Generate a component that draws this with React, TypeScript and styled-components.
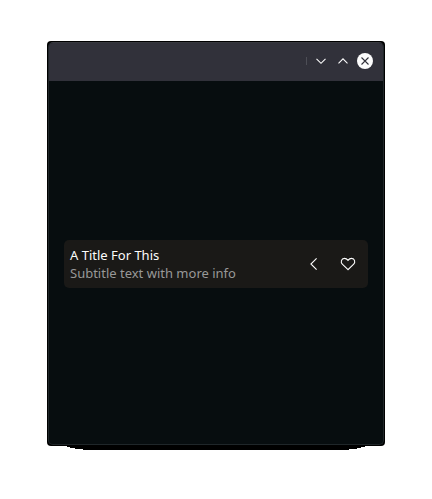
import React from "react";
import styled, { createGlobalStyle } from "styled-components";

const GlobalStyle = createGlobalStyle`
  * { box-sizing: border-box; }
  body { margin: 0; background: #fff; }
`;

const Desktop = styled.main`
  width: 432px;
  height: 499px;
  padding: 41px 47px 0;
  background: #fff;
  font-family: "Noto Sans", sans-serif;
`;

const WindowFrame = styled.section`
  display: flex;
  flex-direction: column;
  width: 338px;
  height: 405px;
  padding: 1px;
  border-radius: 4px;
  background: #000;
`;

const WindowSurface = styled.div`
  flex: 1;
  display: flex;
  flex-direction: column;
  border: 1px solid #1f2629;
  border-top-color: #37383e;
  border-radius: 5px;
  overflow: hidden;
  background: #070d0f;
`;

const TitleBar = styled.header`
  display: flex;
  align-items: center;
  justify-content: flex-end;
  flex: none;
  height: 38px;
  padding: 0 9px 2px 0;
  background: #31313a;
`;

const Separator = styled.span`
  width: 1px;
  height: 8px;
  margin-right: 1px;
  background: #4d4e56;
`;

const WindowButton = styled.button`
  display: flex;
  width: 18px;
  height: 18px;
  margin-left: 4px;
  padding: 0;
  border: 0;
  background: none;
`;

const Content = styled.div`
  flex: 1;
  display: flex;
  align-items: center;
  padding: 3px 15px 0;
`;

const Card = styled.article`
  display: flex;
  align-items: center;
  width: 304px;
  height: 48px;
  padding: 0 9px 0 6px;
  border-radius: 5px;
  background: #1a1917;
`;

const Labels = styled.div`
  flex: 1;
  font-size: 13px;
  line-height: 18px;
  white-space: nowrap;
`;

const Title = styled.div`
  color: #fcfcfc;
`;

const Subtitle = styled.div`
  color: #989897;
`;

const Action = styled.button`
  display: flex;
  width: 22px;
  height: 22px;
  margin-left: 12px;
  padding: 0;
  border: 0;
  background: none;
`;

const Shadow = styled.div`
  width: 298px;
  height: 4px;
  margin: 0 auto;
  background: #000;
  clip-path: polygon(
    0 0, 298px 0, 298px 1px, 294px 1px, 294px 2px, 290px 2px, 290px 3px, 282px 3px, 282px 4px,
    16px 4px, 16px 3px, 8px 3px, 8px 2px, 3px 2px, 3px 1px, 0 1px
  );
`;

export default function App() {
  return (
    <>
      <GlobalStyle />
      <Desktop>
        <WindowFrame>
          <WindowSurface>
            <TitleBar>
              <Separator />
              <WindowButton aria-label="Minimize">
                <svg width="18" height="18" fill="none" stroke="#fcfcfc" strokeWidth="1.1">
                  <path d="M4.500 6.800 9 11.300l4.500-4.500" />
                </svg>
              </WindowButton>
              <WindowButton aria-label="Maximize">
                <svg width="18" height="18" fill="none" stroke="#fcfcfc" strokeWidth="1.1">
                  <path d="M4.500 11.300 9 6.800l4.500 4.500" />
                </svg>
              </WindowButton>
              <WindowButton aria-label="Close">
                <svg width="18" height="18" fill="none">
                  <circle cx="9" cy="9" r="8" fill="#fcfcfc" />
                  <path d="m5.500 5.500 7 7m0-7-7 7" stroke="#31313a" strokeWidth="1.1" />
                </svg>
              </WindowButton>
            </TitleBar>
            <Content>
              <Card>
                <Labels>
                  <Title>A Title For This</Title>
                  <Subtitle>Subtitle text with more info</Subtitle>
                </Labels>
                <Action aria-label="Back">
                  <svg width="22" height="22" fill="none" stroke="#fcfcfc" strokeWidth="1.1">
                    <path d="m13.600 5.300-5.700 5.700 5.700 5.700" />
                  </svg>
                </Action>
                <Action aria-label="Favorite">
                  <svg width="22" height="22" fill="none" stroke="#fcfcfc" strokeWidth="1.1">
                    <path d="M11 16.700 5.300 11.100C3.500 9.300 4.100 5.400 7.400 5.400c1.800 0 2.800.9 3.600 2 .8-1.100 1.800-2 3.600-2 3.300 0 3.900 3.900 2.100 5.700z" />
                  </svg>
                </Action>
              </Card>
            </Content>
          </WindowSurface>
        </WindowFrame>
        <Shadow />
      </Desktop>
    </>
  );
}
